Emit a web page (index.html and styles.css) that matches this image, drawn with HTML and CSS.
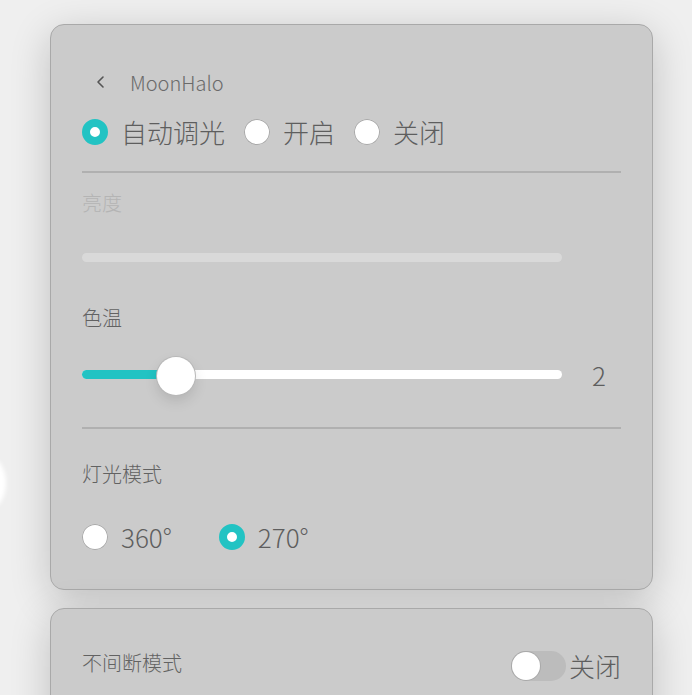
FILE: index.html
```html
<!DOCTYPE html>
<html lang="zh-CN">

<head>
    <meta charset="UTF-8">
    <meta name="viewport" content="width=device-width, initial-scale=1.0">
    <title>MoonHalo</title>
    <link rel="stylesheet" href="styles.css">
</head>

<body>

    <div class="edge-glow"></div>

    <div class="page">

        <!-- Light settings card -->
        <div class="card card-main">
            <div class="header">
                <span class="back">
                    <svg width="12" height="14" viewBox="0 0 12 14">
                        <path d="M8 2 L3 7 L8 12" fill="none" stroke="#555" stroke-width="1.6" stroke-linecap="round" stroke-linejoin="round"/>
                    </svg>
                </span>
                <span class="title">MoonHalo</span>
            </div>

            <div class="radio-row mode-row">
                <label class="radio"><span class="dot checked"></span><span class="big">自动调光</span></label>
                <label class="radio"><span class="dot"></span><span class="big">开启</span></label>
                <label class="radio"><span class="dot"></span><span class="big">关闭</span></label>
            </div>

            <hr class="divider">

            <div class="label disabled">亮度</div>
            <div class="slider-row">
                <div class="track track-disabled"></div>
                <div class="value"></div>
            </div>

            <div class="label temp-label">色温</div>
            <div class="slider-row">
                <div class="track">
                    <div class="fill" style="width: 19.5%"></div>
                    <div class="thumb" style="left: 19.5%"></div>
                </div>
                <div class="value">2</div>
            </div>

            <hr class="divider">

            <div class="label mode-label">灯光模式</div>
            <div class="radio-row angle-row">
                <label class="radio"><span class="dot"></span><span class="mid">360°</span></label>
                <label class="radio"><span class="dot checked"></span><span class="mid">270°</span></label>
            </div>
        </div>

        <!-- Continuous mode card -->
        <div class="card card-second">
            <div class="switch-row">
                <div class="label">不间断模式</div>
                <div class="switch-wrap">
                    <span class="switch"><span class="knob"></span></span>
                    <span class="big">关闭</span>
                </div>
            </div>
        </div>

    </div>

</body>

</html>
```

FILE: styles.css
```css
body {
    font-family: "Noto Sans CJK SC", "Noto Sans", sans-serif;
    font-weight: 300;
    margin: 0;
    padding: 0;
    background-color: #efefef;
    color: #5e5e5e;
    overflow: hidden;
    height: 695px;
}

.edge-glow {
    position: absolute;
    left: -34px;
    top: 455px;
    width: 40px;
    height: 56px;
    border-radius: 50%;
    background-color: #fff;
    filter: blur(2px);
}

.page {
    padding: 24px 0 0 50px;
    width: 603px;
}

.card {
    background-color: #cbcbcb;
    border: 1px solid #a9a9a9;
    border-radius: 14px;
    box-shadow: 0 10px 40px rgba(0, 0, 0, 0.2);
    padding: 0 31px;
}

.card-main {
    box-sizing: border-box;
    height: 566px;
    padding-top: 44px;
}

.card-second {
    margin-top: 18px;
    padding-top: 34px;
    height: 120px;
}

.header {
    display: flex;
    align-items: center;
    height: 26px;
    padding-left: 13px;
}

.back {
    display: flex;
    width: 35px;
}

.title {
    font-size: 20px;
    color: #6a6a6a;
}

.radio-row {
    display: flex;
    align-items: center;
    height: 34px;
}

.mode-row {
    margin-top: 20px;
    gap: 19px;
}

.angle-row {
    margin-top: 33px;
    gap: 47px;
}

.radio {
    display: flex;
    align-items: center;
    gap: 13px;
}

.dot {
    width: 26px;
    height: 26px;
    border-radius: 50%;
    background-color: #fff;
    box-shadow: inset 0 0 0 1px #a8a8a8;
    box-sizing: border-box;
}

.dot.checked {
    border: 8px solid #22c3c3;
    box-shadow: none;
}

.big {
    font-size: 26px;
    line-height: 34px;
    color: #5e5e5e;
}

.mid {
    font-size: 26px;
    line-height: 34px;
    color: #5e5e5e;
}

.divider {
    border: none;
    height: 2px;
    background-color: #b0b0b0;
    margin: 22px 0 0;
}

.label {
    font-size: 20px;
    line-height: 26px;
    color: #626262;
}

.divider + .label {
    margin-top: 17px;
}

.label.disabled {
    color: #b4b4b4;
}

.label.temp-label {
    margin-top: 28px;
}

.label.mode-label {
    margin-top: 32px;
}

.slider-row {
    display: flex;
    align-items: center;
    height: 40px;
    margin-top: 21px;
}

.temp-label + .slider-row {
    margin-top: 23px;
}

.slider-row + .divider {
    margin-top: 33px;
}

.track {
    position: relative;
    flex: 1;
    height: 9px;
    border-radius: 5px;
    background-color: #fff;
}

.track-disabled {
    background-color: #d9d9d9;
}

.fill {
    height: 100%;
    border-radius: 5px;
    background-color: #22c3c3;
}

.thumb {
    position: absolute;
    top: 50%;
    width: 38px;
    height: 38px;
    margin: -17px 0 0 -19px;
    border-radius: 50%;
    background-color: #fff;
    box-shadow: 0 0 0 1px #b8b8b8, 0 6px 14px rgba(0, 0, 0, 0.12);
}

.value {
    width: 59px;
    padding-left: 30px;
    box-sizing: border-box;
    font-size: 26px;
    color: #5e5e5e;
    padding-top: 1px;
}

.switch-row {
    display: flex;
    justify-content: space-between;
    align-items: center;
}

.switch-wrap {
    display: flex;
    align-items: center;
    margin-top: 6px;
    gap: 3px;
}

.switch {
    display: flex;
    align-items: center;
    width: 55px;
    height: 30px;
    border-radius: 15px;
    background-color: #bcbcbc;
}

.knob {
    width: 28px;
    height: 28px;
    border-radius: 50%;
    background-color: #fff;
    box-shadow: 0 0 0 1px #a9a9a9;
    margin-left: 1px;
}
```
